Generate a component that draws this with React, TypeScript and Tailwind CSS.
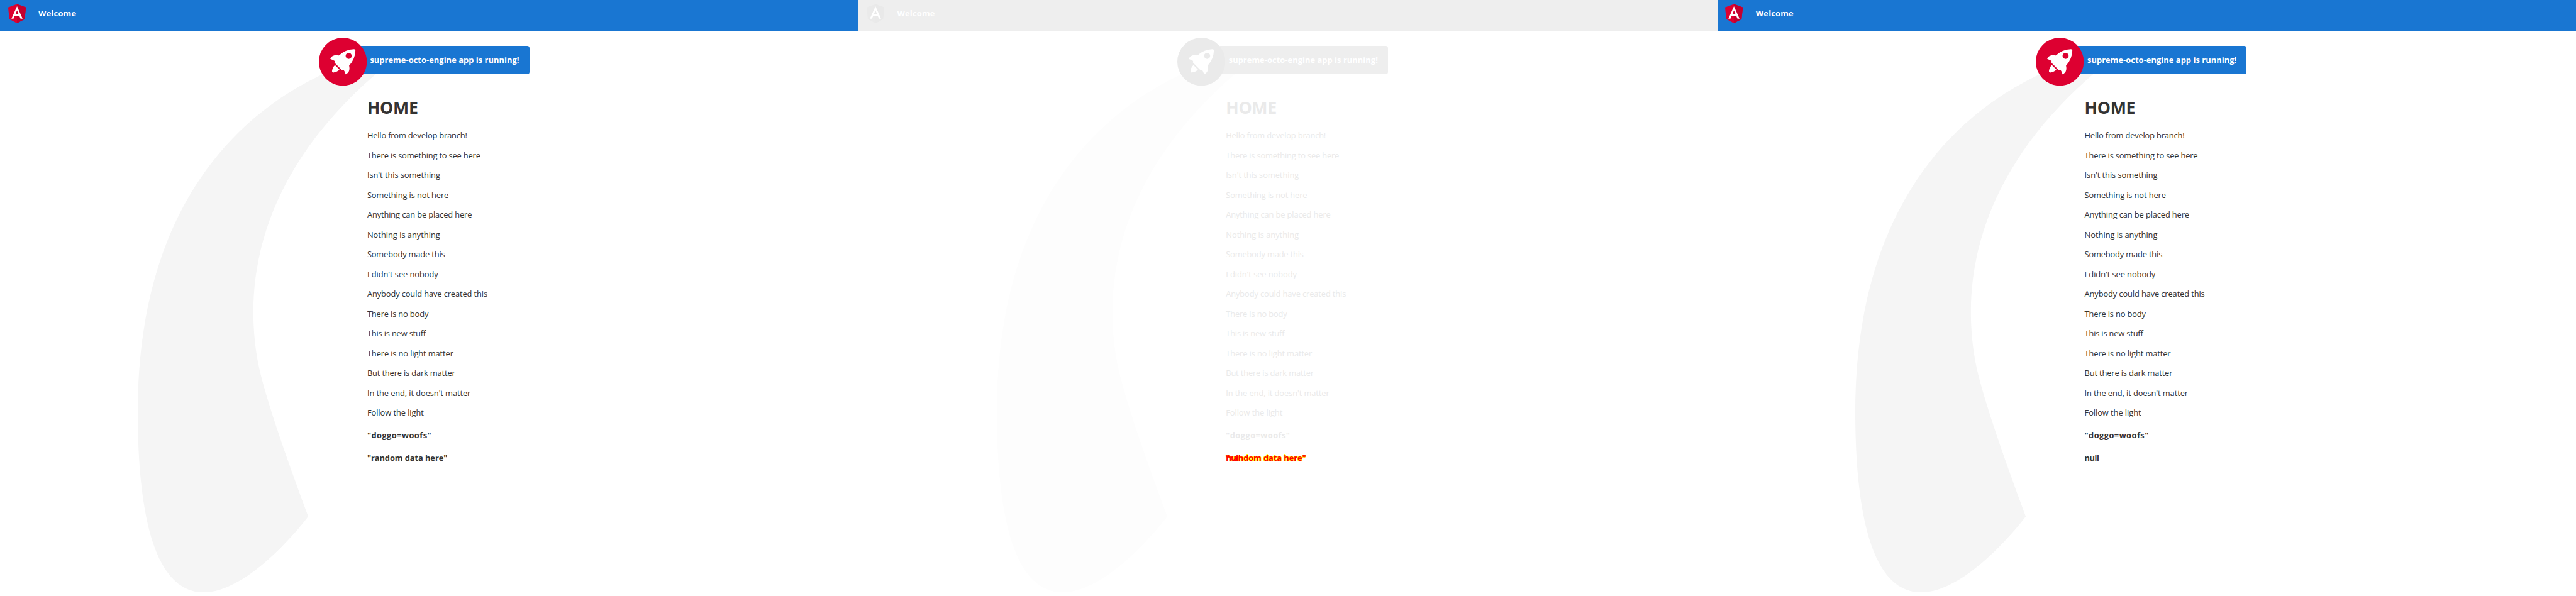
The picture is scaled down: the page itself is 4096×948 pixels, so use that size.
type Theme = {
  bar: string;
  text: string;
  smoke: string;
  disc: string;
  shield: string;
  shieldShade: string;
};

const SOLID: Theme = {
  bar: "bg-[#1976d2]",
  text: "text-[#333333]",
  smoke: "#f5f5f5",
  disc: "#dd0031",
  shield: "#dd0031",
  shieldShade: "#c3002f",
};

const FADED: Theme = {
  bar: "bg-[#eeeeee]",
  text: "text-[#eaeaea]",
  smoke: "#fdfdfd",
  disc: "#eaeaea",
  shield: "#eaeaea",
  shieldShade: "#e9e9e9",
};

const LINES = [
  { text: "Hello from develop branch!", spacing: "tracking-[-0.19px]" },
  { text: "There is something to see here", spacing: "tracking-[-0.18px]" },
  { text: "Isn't this something", spacing: "tracking-[-0.07px]" },
  { text: "Something is not here", spacing: "tracking-[-0.13px]" },
  { text: "Anything can be placed here", spacing: "tracking-[-0.14px]" },
  { text: "Nothing is anything", spacing: "tracking-[-0.02px]" },
  { text: "Somebody made this", spacing: "tracking-[-0.18px]" },
  { text: "I didn't see nobody", spacing: "tracking-[-0.08px]" },
  { text: "Anybody could have created this", spacing: "tracking-[-0.13px]" },
  { text: "There is no body", spacing: "tracking-[-0.16px]" },
  { text: "This is new stuff", spacing: "tracking-[-0.19px]" },
  { text: "There is no light matter", spacing: "tracking-[-0.13px]" },
  { text: "But there is dark matter", spacing: "tracking-[-0.17px]" },
  { text: "In the end, it doesn't matter", spacing: "tracking-[-0.1px]" },
  { text: "Follow the light", spacing: "tracking-[-0.07px]" },
];

function AngularLogo({ theme }: { theme: Theme }) {
  return (
    <svg viewBox="0 0 250 250" className="size-10 shrink-0" aria-hidden="true">
      <path fill={theme.shield} d="M125 30 31.9 63.2l14.2 123.1L125 230l78.9-43.7 14.2-123.1z" />
      <path fill={theme.shieldShade} d="M125 30v22.2-.1V230l78.9-43.7 14.2-123.1L125 30z" />
      <path
        fill="#fff"
        d="M125 52.1 66.8 182.6h21.7l11.7-29.2h49.4l11.7 29.2H183L125 52.1zm17 83.3h-34l17-40.9 17 40.9z"
      />
    </svg>
  );
}

function Rocket({ theme }: { theme: Theme }) {
  return (
    <svg
      viewBox="0 0 101.678 101.678"
      className="absolute -left-2.5 top-[-13.3px] size-20"
      aria-hidden="true"
    >
      <circle cx="50.839" cy="50.839" r="50.839" fill={theme.disc} />
      <g transform="translate(24.185 24.185)" fill="#fff">
        <path
          d="M3.4,42.615a3.084,3.084,0,0,0,3.553,3.553,21.419,21.419,0,0,0,12.215-6.107L9.511,30.4A21.419,21.419,0,0,0,3.4,42.615Z"
          transform="translate(0.371 3.363)"
        />
        <path d="M53.3,3.221A3.09,3.09,0,0,0,50.081,0,48.227,48.227,0,0,0,18.322,13.437c-6-1.666-14.991-1.221-18.322,7.218A33.892,33.892,0,0,1,9.439,25.1l-.333.666a3.013,3.013,0,0,0,.555,3.553L23.985,43.641a2.9,2.9,0,0,0,3.553.555l.666-.333A33.892,33.892,0,0,1,32.647,53.3c8.55-3.664,8.884-12.326,7.218-18.322A48.227,48.227,0,0,0,53.3,3.221ZM34.424,9.772a6.439,6.439,0,1,1,9.106,9.106,6.368,6.368,0,0,1-9.106,0A6.467,6.467,0,0,1,34.424,9.772Z" />
      </g>
    </svg>
  );
}

function Smoke({ color }: { color: string }) {
  return (
    <svg
      viewBox="0 0 516.119 1083.632"
      className="absolute left-[230px] top-[89.4px] h-[898.4px] w-[427.9px]"
      aria-hidden="true"
    >
      <path
        d="M644.6,141S143.02,215.537,147.049,870.207s342.774,201.755,342.774,201.755S404.659,847.213,388.815,762.2c-27.116-145.51-11.551-384.124,271.9-609.1C671.15,139.365,644.6,141,644.6,141Z"
        transform="translate(-147.02 -140.939)"
        fill={color}
      />
    </svg>
  );
}

function LastLine({ value }: { value: "random" | "null" | "diff" }) {
  if (value === "null") return <span className="tracking-[-0.5px]">null</span>;
  if (value === "random") return <span className="tracking-[-0.07px]">"random data here"</span>;
  return (
    <span className="relative inline-block text-[#ff0000]">
      <span className="tracking-[-0.07px] [text-shadow:1px_0_#ffff00,-1px_0_#ffff00,0_1px_#ffff00,0_-1px_#ffff00]">
        "random data here"
      </span>
      <span className="absolute left-0 top-0 tracking-[-0.5px]">null</span>
    </span>
  );
}

function Page({ theme, last }: { theme: Theme; last: "random" | "null" | "diff" }) {
  return (
    <section className="relative h-[994px] w-[1431px] shrink-0 overflow-hidden bg-white">
      <Smoke color={theme.smoke} />
      <header
        className={`relative flex h-[52px] items-center pb-2 pl-2 text-[13.5px] font-bold text-white ${theme.bar}`}
      >
        <AngularLogo theme={theme} />
        <span className="ml-4 pt-[2px] leading-5 tracking-[0.2px]">Welcome</span>
      </header>
      <main className={`relative pt-6 ${theme.text}`}>
        <div
          className={`relative ml-[541px] flex h-12 w-[341px] items-center rounded-[4px] pl-[75.7px] text-[13.5px] font-bold text-white ${theme.bar}`}
        >
          <Rocket theme={theme} />
          <span className="whitespace-nowrap tracking-[0.05px]">supreme-octo-engine app is running!</span>
        </div>
        <div className="ml-[612px] mt-[35.6px] text-[13.5px]">
          <h1 className="mb-[10.3px] h-10 text-[28px] font-bold leading-10 tracking-[-0.3px]">HOME</h1>
          {LINES.map((line) => (
            <p key={line.text} className={`h-[33px] whitespace-nowrap leading-[33px] ${line.spacing}`}>
              {line.text}
            </p>
          ))}
          <div className="mt-[1.2px] font-bold leading-[38px]">
            <p className="h-[38px] tracking-[0.45px]">"doggo=woofs"</p>
            <p className="h-[38px]">
              <LastLine value={last} />
            </p>
          </div>
        </div>
      </main>
    </section>
  );
}

export default function App() {
  return (
    <div className="h-[948px] w-[4096px] overflow-hidden bg-white font-['Open_Sans','Noto_Sans',sans-serif]">
      <div className="flex w-[4293px] [zoom:0.95411]">
        <Page theme={SOLID} last="random" />
        <Page theme={FADED} last="diff" />
        <Page theme={SOLID} last="null" />
      </div>
    </div>
  );
}
